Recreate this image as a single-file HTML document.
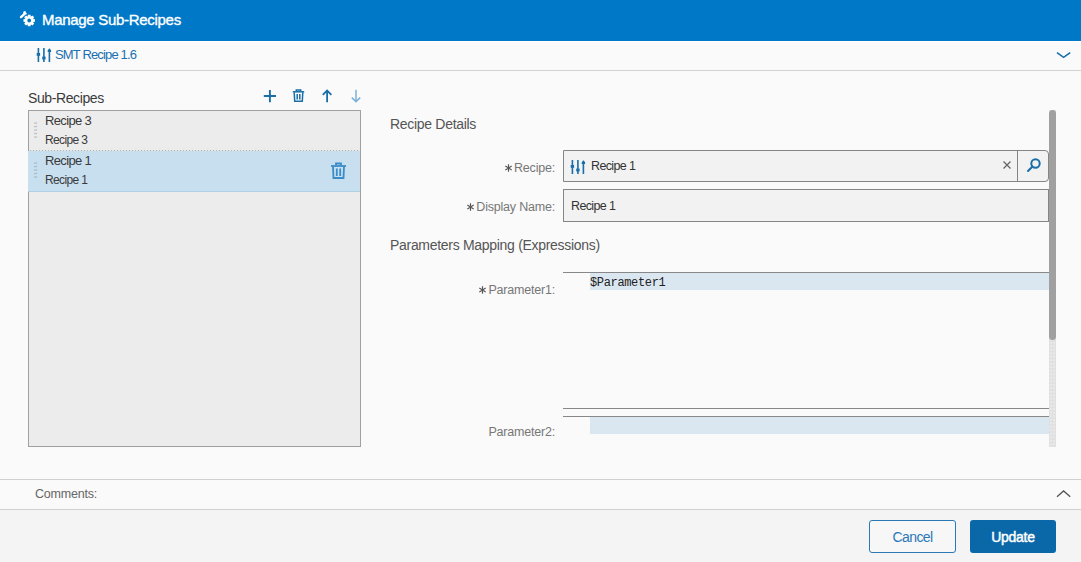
<!DOCTYPE html>
<html><head><meta charset="utf-8">
<style>
*{margin:0;padding:0;box-sizing:border-box}
html,body{width:1081px;height:562px;overflow:hidden;background:#fafafa;font-family:"Liberation Sans",sans-serif}
.a{position:absolute;white-space:nowrap}
#hdr{left:0;top:0;width:1081px;height:41px;background:#0078c8}
#hdrw{left:0;top:41px;width:1081px;height:1px;background:#fff}
#title{left:42px;top:11px;font-size:15px;line-height:18px;color:#fff;letter-spacing:-0.3px;-webkit-text-stroke:0.35px #fff}
#sub{left:55px;top:47px;font-size:13px;line-height:16px;color:#1a70b0;letter-spacing:-0.85px}
#subline{left:0;top:70px;width:1081px;height:1px;background:#d2d2d2}
#subr{left:28px;top:90px;font-size:14px;line-height:16px;color:#3a3a3a;letter-spacing:-0.4px}
#list{left:28px;top:110px;width:333px;height:337px;border:1px solid #a0a0a0;background:#ececec}
#row1{left:28px;top:111px;width:332px;height:40px}
#row2{left:28px;top:151px;width:332px;height:41px;background:#c8dff0;border-bottom:1px solid #b0d0e4}
.rt1{font-size:13px;line-height:15px;color:#3a3a3a;letter-spacing:-0.65px}
.rt2{font-size:12px;line-height:14px;color:#3a3a3a;letter-spacing:-0.65px}
.lbl{font-size:12.5px;line-height:15px;color:#777;text-align:right;letter-spacing:-0.2px}
.ast{display:inline-block;width:7px;height:8px;margin-right:2.5px;vertical-align:0px}

.fld{border:1px solid #858585;background:#f2f2f2}
.ftx{font-size:12.5px;line-height:15px;color:#333;letter-spacing:-0.45px}
.sec{font-size:14px;line-height:16px;color:#555;letter-spacing:-0.3px}
#comm{left:35px;top:487px;font-size:12.5px;line-height:15px;color:#666;letter-spacing:-0.2px}
#cl1{left:0;top:479px;width:1081px;height:1px;background:#d0d0d0}
#cl2{left:0;top:509px;width:1081px;height:1px;background:#d0d0d0}
#foot{left:0;top:510px;width:1081px;height:52px;background:#f4f4f4}
#cancel{left:869px;top:520px;width:87px;height:33px;border:1px solid #2a78b4;border-radius:3px;background:#f7f7f7;color:#2a78b8;font-size:14px;line-height:33px;text-align:center;letter-spacing:-0.6px}
#update{left:970px;top:520px;width:86px;height:33px;border-radius:3px;background:#0b68a8;color:#fff;font-size:14px;line-height:35px;text-align:center;font-weight:normal;letter-spacing:-0.3px;-webkit-text-stroke:0.45px #fff}
</style></head><body>
<div id="hdr" class="a"></div>
<div id="hdrw" class="a"></div>
<svg class="a" style="left:18px;top:10px" width="20" height="20" viewBox="0 0 20 20">
  <path fill="#fff" fill-rule="evenodd" d="M15.33 9.00 L16.95 9.17 L16.95 11.83 L15.33 12.00 L15.19 12.36 L16.20 13.63 L14.33 15.50 L13.06 14.49 L12.70 14.63 L12.53 16.25 L9.87 16.25 L9.70 14.63 L9.34 14.49 L8.07 15.50 L6.20 13.63 L7.21 12.36 L7.07 12.00 L5.45 11.83 L5.45 9.17 L7.07 9.00 L7.21 8.64 L6.20 7.37 L8.07 5.50 L9.34 6.51 L9.70 6.37 L9.87 4.75 L12.53 4.75 L12.70 6.37 L13.06 6.51 L14.33 5.50 L16.20 7.37 L15.19 8.64 Z M13.10 10.50 A1.9 1.9 0 1 0 9.30 10.50 A1.9 1.9 0 1 0 13.10 10.50 Z"/>
  <path d="M3.0 7.1 L6.0 4.4" stroke="#fff" stroke-width="2.4" stroke-linecap="round"/>
  <circle cx="7.0" cy="2.9" r="1.9" fill="#fff"/>
  <path d="M7.6 1.2 L9.4 0.6 L9.6 2.6 L8.0 3.0 Z" fill="#0078c8"/>
</svg>
<div id="title" class="a">Manage Sub-Recipes</div>

<svg class="a" style="left:35px;top:47px" width="18" height="16" viewBox="0 0 18 16">
  <g fill="#1a6ea8">
    <rect x="2.6" y="1" width="1.6" height="14"/><rect x="1.7" y="6" width="3.4" height="2.8"/>
    <rect x="8.1" y="1" width="1.6" height="14"/><rect x="7.2" y="9.6" width="3.4" height="2.8"/>
    <path d="M13.6 4 H15.2 V15 H13.6 Z M14.4 1.2 L16.1 3.3 V5 H12.7 V3.3 Z"/>
  </g>
</svg>
<div id="sub" class="a">SMT Recipe 1.6</div>
<svg class="a" style="left:1055px;top:49px" width="17" height="11" viewBox="0 0 17 11"><path d="M2 3.6 L8.6 8.3 L15.2 3.6" fill="none" stroke="#1a6ea8" stroke-width="1.6"/></svg>
<div id="subline" class="a"></div>

<div id="subr" class="a">Sub-Recipes</div>
<!-- toolbar icons -->
<svg class="a" style="left:262px;top:88px" width="16" height="16" viewBox="0 0 16 16"><path d="M7.9 2 V14.2 M1.8 8 H14" stroke="#1a6ea8" stroke-width="1.9"/></svg>
<svg class="a" style="left:292px;top:88px" width="14" height="16" viewBox="0 0 14 16"><g fill="none" stroke="#1a6ea8" stroke-width="1.5"><path d="M0.8 3.8 H12.2"/><path d="M4.3 3.5 V1.9 H8.7 V3.5"/><path d="M2.2 4.3 L2.7 13.2 H10.3 L10.8 4.3"/><path d="M5.2 6 V11.5 M7.8 6 V11.5"/></g></svg>
<svg class="a" style="left:320px;top:88px" width="14" height="16" viewBox="0 0 14 16"><g fill="none" stroke="#1a6ea8" stroke-width="1.8"><path d="M7.1 2.5 V14.2"/><path d="M2.8 6.8 L7.1 2.6 L11.4 6.8"/></g></svg>
<svg class="a" style="left:349px;top:88px" width="14" height="16" viewBox="0 0 14 16"><g fill="none" stroke="#7ab2da" stroke-width="1.5"><path d="M7 1.8 V13.5"/><path d="M2.8 9.6 L7 13.6 L11.2 9.6"/></g></svg>
<div id="list" class="a"></div>
<div id="row1" class="a"></div>
<div id="row2" class="a"></div>
<div class="a rt1" style="left:45px;top:113px">Recipe 3</div>
<div class="a rt2" style="left:45px;top:133px">Recipe 3</div>
<div class="a rt1" style="left:45px;top:153px">Recipe 1</div>
<div class="a rt2" style="left:45px;top:173px">Recipe 1</div>
<svg class="a" style="left:330px;top:162px" width="17" height="18" viewBox="0 0 17 18"><g fill="none" stroke="#3a8cc8" stroke-width="1.8"><path d="M1 4 H16"/><path d="M6 3.5 V1.5 H11 V3.5"/><path d="M3 4.5 L3.5 16 H13.5 L14 4.5"/><path d="M6.8 6.5 V14 M10.2 6.5 V14"/></g></svg>
<!-- drag handles -->
<svg class="a" style="left:33px;top:122px" width="6" height="17" viewBox="0 0 6 17"><g fill="#c2c2c2"><rect x="1" y="0.4" width="3.2" height="1.3"/><rect x="1" y="3.9" width="3.2" height="1.3"/><rect x="1" y="7.4" width="3.2" height="1.3"/><rect x="1" y="10.9" width="3.2" height="1.3"/><rect x="1" y="14.4" width="3.2" height="1.3"/></g></svg>
<svg class="a" style="left:33px;top:162px" width="6" height="17" viewBox="0 0 6 17"><g fill="#a9bccb"><rect x="1" y="0.4" width="3.2" height="1.3"/><rect x="1" y="3.9" width="3.2" height="1.3"/><rect x="1" y="7.4" width="3.2" height="1.3"/><rect x="1" y="10.9" width="3.2" height="1.3"/><rect x="1" y="14.4" width="3.2" height="1.3"/></g></svg>
<div class="a" style="left:29px;top:150px;width:331px;height:1px;background:repeating-linear-gradient(90deg,#e6e6e6 0 1px,#b4b4b4 1px 2px,#e6e6e6 2px 3px)"></div>
<!-- right form -->
<div class="a sec" style="left:390px;top:116px">Recipe Details</div>
<div class="a lbl" style="right:526px;top:161px"><svg class="ast" viewBox="0 0 7 8"><path d="M3.5 0.3 V7.7 M0.3 2.1 L6.7 5.9 M0.3 5.9 L6.7 2.1" stroke="#555" stroke-width="1.15"/></svg>Recipe:</div>
<div class="a fld" style="left:563px;top:150px;width:486px;height:32px;border-radius:0 4px 4px 0"></div>
<div class="a" style="left:1017px;top:151px;width:1px;height:30px;background:#858585"></div>
<svg class="a" style="left:569px;top:159px" width="18" height="16" viewBox="0 0 18 16">
  <g fill="#1a6ea8">
    <rect x="2.6" y="1" width="1.6" height="14"/><rect x="1.7" y="6" width="3.4" height="2.8"/>
    <rect x="8.1" y="1" width="1.6" height="14"/><rect x="7.2" y="9.6" width="3.4" height="2.8"/>
    <path d="M13.6 4 H15.2 V15 H13.6 Z M14.4 1.2 L16.1 3.3 V5 H12.7 V3.3 Z"/>
  </g>
</svg>
<div class="a ftx" style="left:591px;top:159px;letter-spacing:-0.62px">Recipe 1</div>
<svg class="a" style="left:1002px;top:160px" width="10" height="10" viewBox="0 0 10 10"><path d="M1.5 1.5 L8.5 8.5 M8.5 1.5 L1.5 8.5" stroke="#666" stroke-width="1.3"/></svg>
<svg class="a" style="left:1026px;top:157px" width="16" height="16" viewBox="0 0 16 16"><g fill="none" stroke="#1a6ea8" stroke-width="2"><circle cx="9.5" cy="6.5" r="4.2"/><path d="M6.5 9.5 L2 14" stroke-linecap="round"/></g></svg>

<div class="a lbl" style="right:526px;top:200px"><svg class="ast" viewBox="0 0 7 8"><path d="M3.5 0.3 V7.7 M0.3 2.1 L6.7 5.9 M0.3 5.9 L6.7 2.1" stroke="#555" stroke-width="1.15"/></svg>Display Name:</div>
<div class="a fld" style="left:563px;top:189px;width:486px;height:33px"></div>
<div class="a ftx" style="left:571px;top:199px;letter-spacing:-0.62px">Recipe 1</div>

<div class="a sec" style="left:390px;top:237px">Parameters Mapping (Expressions)</div>
<div class="a lbl" style="right:526px;top:283px"><svg class="ast" viewBox="0 0 7 8"><path d="M3.5 0.3 V7.7 M0.3 2.1 L6.7 5.9 M0.3 5.9 L6.7 2.1" stroke="#555" stroke-width="1.15"/></svg>Parameter1:</div>
<div class="a" style="left:563px;top:272px;width:486px;height:1px;background:#888"></div>
<div class="a" style="left:590px;top:273px;width:459px;height:17px;background:#dbe7f0"></div>
<div class="a" style="left:590px;top:276px;font-family:'Liberation Mono',monospace;font-size:12px;line-height:15px;color:#222;letter-spacing:-0.35px">$Parameter1</div>
<div class="a" style="left:563px;top:408px;width:486px;height:1px;background:#888"></div>
<div class="a" style="left:563px;top:416px;width:486px;height:1px;background:#888"></div>
<div class="a" style="left:590px;top:417px;width:459px;height:17px;background:#dbe7f0"></div>
<div class="a lbl" style="right:526px;top:425px">Parameter2:</div>

<!-- scrollbar -->
<div class="a" style="left:1049px;top:110px;width:7px;height:337px;background-color:#e0e0e0;background-image:radial-gradient(circle,#f2f2f2 0.7px,transparent 1px);background-size:3px 3.5px;background-position:0.5px 0"></div>
<div class="a" style="left:1049px;top:110px;width:7px;height:230px;background:#a0a0a0;border-radius:3.5px"></div>

<div id="cl1" class="a"></div>
<div id="comm" class="a">Comments:</div>
<svg class="a" style="left:1055px;top:487px" width="17" height="11" viewBox="0 0 17 11"><path d="M2 9.8 L8.6 3.9 L15.2 9.8" fill="none" stroke="#555" stroke-width="1.3"/></svg>
<div id="foot" class="a"></div>
<div id="cl2" class="a"></div>
<div id="cancel" class="a">Cancel</div>
<div id="update" class="a">Update</div>
</body></html>
